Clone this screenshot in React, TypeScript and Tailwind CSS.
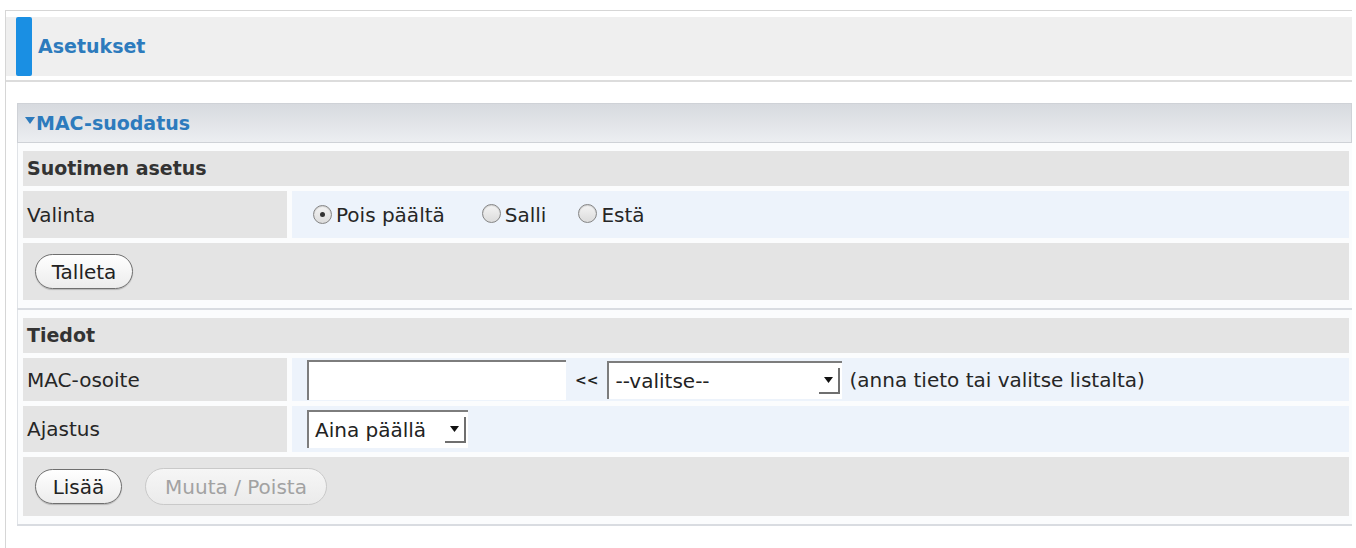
import React from "react";

function Radio({ checked }: { checked?: boolean }) {
  return (
    <span className="relative inline-flex h-[19px] w-[19px] shrink-0 items-center justify-center rounded-full border-[1.5px] border-[#858585] bg-gradient-to-b from-[#f4f4f4] to-[#dcdcdc] shadow-[inset_0_1px_1px_rgba(0,0,0,0.15)]">
      {checked && <span className="h-[5px] w-[5px] rounded-full bg-[#333]" />}
    </span>
  );
}

function PillButton({ label, width, disabled }: { label: string; width: string; disabled?: boolean }) {
  return (
    <div
      className={
        disabled
          ? "flex h-[37px] items-center justify-center rounded-full border-[1.5px] border-[#c9c9c9] bg-gradient-to-b from-[#f6f6f6] to-[#ebebeb] text-[#a2a2a2] " + width
          : "flex h-[35px] items-center justify-center rounded-full border-[1.5px] border-[#6f6f6f] bg-gradient-to-b from-[#ffffff] to-[#ececec] text-[#222] shadow-[0_1px_1px_rgba(0,0,0,0.2)] " + width
      }
    >
      {label}
    </div>
  );
}

function SelectBox({ text, width }: { text: string; width: string }) {
  return (
    <div
      className={
        "flex h-[38px] items-center border-l-2 border-t-2 border-[#7d7d7d] bg-white pl-[6px] pr-[2px] " + width
      }
    >
      <span className="flex-1 whitespace-nowrap text-[#222]">{text}</span>
      <span className="flex h-[26px] w-[21px] items-center justify-center border-b-2 border-r-2 border-[#6f6f6f]">
        <svg width="9" height="6" viewBox="0 0 9 6">
          <path d="M0 0 L9 0 L4.5 6 Z" fill="#111" />
        </svg>
      </span>
    </div>
  );
}

export default function App() {
  return (
    <div className="h-[548px] w-[1356px] overflow-hidden bg-white pl-[5px] pt-[10px] font-['DejaVu_Sans',sans-serif] text-[20px] leading-none text-[#262626]">
      <div className="h-full w-[1347px] border-l border-t border-[#d6d6d6] pt-[6px]">
        {/* Header */}
        <div className="flex h-[59px] items-center bg-[#efefef] pl-[10px]">
          <div className="h-full w-[16px] rounded-[2px] bg-[#1a8fe3]" />
          <span className="ml-[6px] text-[19px] font-bold text-[#2d7bbd]">Asetukset</span>
        </div>
        <div className="mt-[4px] h-[2px] bg-[#dcdcdc]" />

        {/* Section */}
        <div className="ml-[11px] mt-[21px] w-[1335px]">
          <div className="flex h-[40px] items-center border border-[#cfd2d7] bg-gradient-to-b from-[#d7dadf] to-[#eceef1] pl-[7px] text-[19px] font-bold text-[#2d7bbd]">
            <svg width="10" height="7" viewBox="0 0 10 7" className="mr-[1px] mb-[6px]">
              <path d="M0 0 L10 0 L5 7 Z" fill="#2d7bbd" />
            </svg>
            <span>MAC-suodatus</span>
          </div>

          {/* Group 1 */}
          <div className="flex flex-col gap-[5px] border-l border-[#e0e3e7] bg-[#fbfcfd] pb-[8px] pl-[5px] pr-[3px] pt-[8px]">
            <div className="flex h-[35px] items-center bg-[#e4e4e4] pl-[4px] text-[19px] font-bold text-[#333]">Suotimen asetus</div>
            <div className="flex h-[47px] gap-[5px]">
              <div className="flex w-[264px] items-center bg-[#e4e4e4] pl-[4px]">Valinta</div>
              <div className="flex flex-1 items-center bg-[#edf3fb] pl-[21px]">
                <Radio checked />
                <span className="ml-[4px]">Pois päältä</span>
                <span className="ml-[37px]"><Radio /></span>
                <span className="ml-[4px]">Salli</span>
                <span className="ml-[32px]"><Radio /></span>
                <span className="ml-[4px]">Estä</span>
              </div>
            </div>
            <div className="flex h-[57px] items-center bg-[#e4e4e4] pl-[12px]">
              <PillButton label="Talleta" width="w-[98px]" />
            </div>
          </div>
          <div className="h-[2px] bg-[#d9dce1]" />

          {/* Group 2 */}
          <div className="flex flex-col gap-[5px] border-l border-[#e0e3e7] bg-[#fbfcfd] pb-[8px] pl-[5px] pr-[3px] pt-[8px]">
            <div className="flex h-[35px] items-center bg-[#e4e4e4] pl-[4px] text-[19px] font-bold text-[#333]">Tiedot</div>
            <div className="flex h-[43px] gap-[5px]">
              <div className="flex w-[264px] items-center bg-[#e4e4e4] pl-[4px]">MAC-osoite</div>
              <div className="flex flex-1 items-center bg-[#edf3fb] pl-[15px]">
                <div className="h-[40px] w-[259px] border-l-2 border-t-2 border-[#7d7d7d] bg-white" />
                <span className="ml-[9px] text-[14px] font-bold text-[#222]">&lt;&lt;</span>
                <SelectBox text="--valitse--" width="ml-[9px] w-[235px]" />
                <span className="ml-[7px]">(anna tieto tai valitse listalta)</span>
              </div>
            </div>
            <div className="flex h-[46px] gap-[5px]">
              <div className="flex w-[264px] items-center bg-[#e4e4e4] pl-[4px]">Ajastus</div>
              <div className="flex flex-1 items-center bg-[#edf3fb] pl-[15px]">
                <SelectBox text="Aina päällä" width="w-[161px]" />
              </div>
            </div>
            <div className="flex h-[59px] items-center gap-[23px] bg-[#e4e4e4] pl-[12px]">
              <PillButton label="Lisää" width="w-[87px]" />
              <PillButton label="Muuta / Poista" width="w-[182px]" disabled />
            </div>
          </div>
          <div className="h-[2px] bg-[#d9dce1]" />
        </div>
      </div>
    </div>
  );
}
